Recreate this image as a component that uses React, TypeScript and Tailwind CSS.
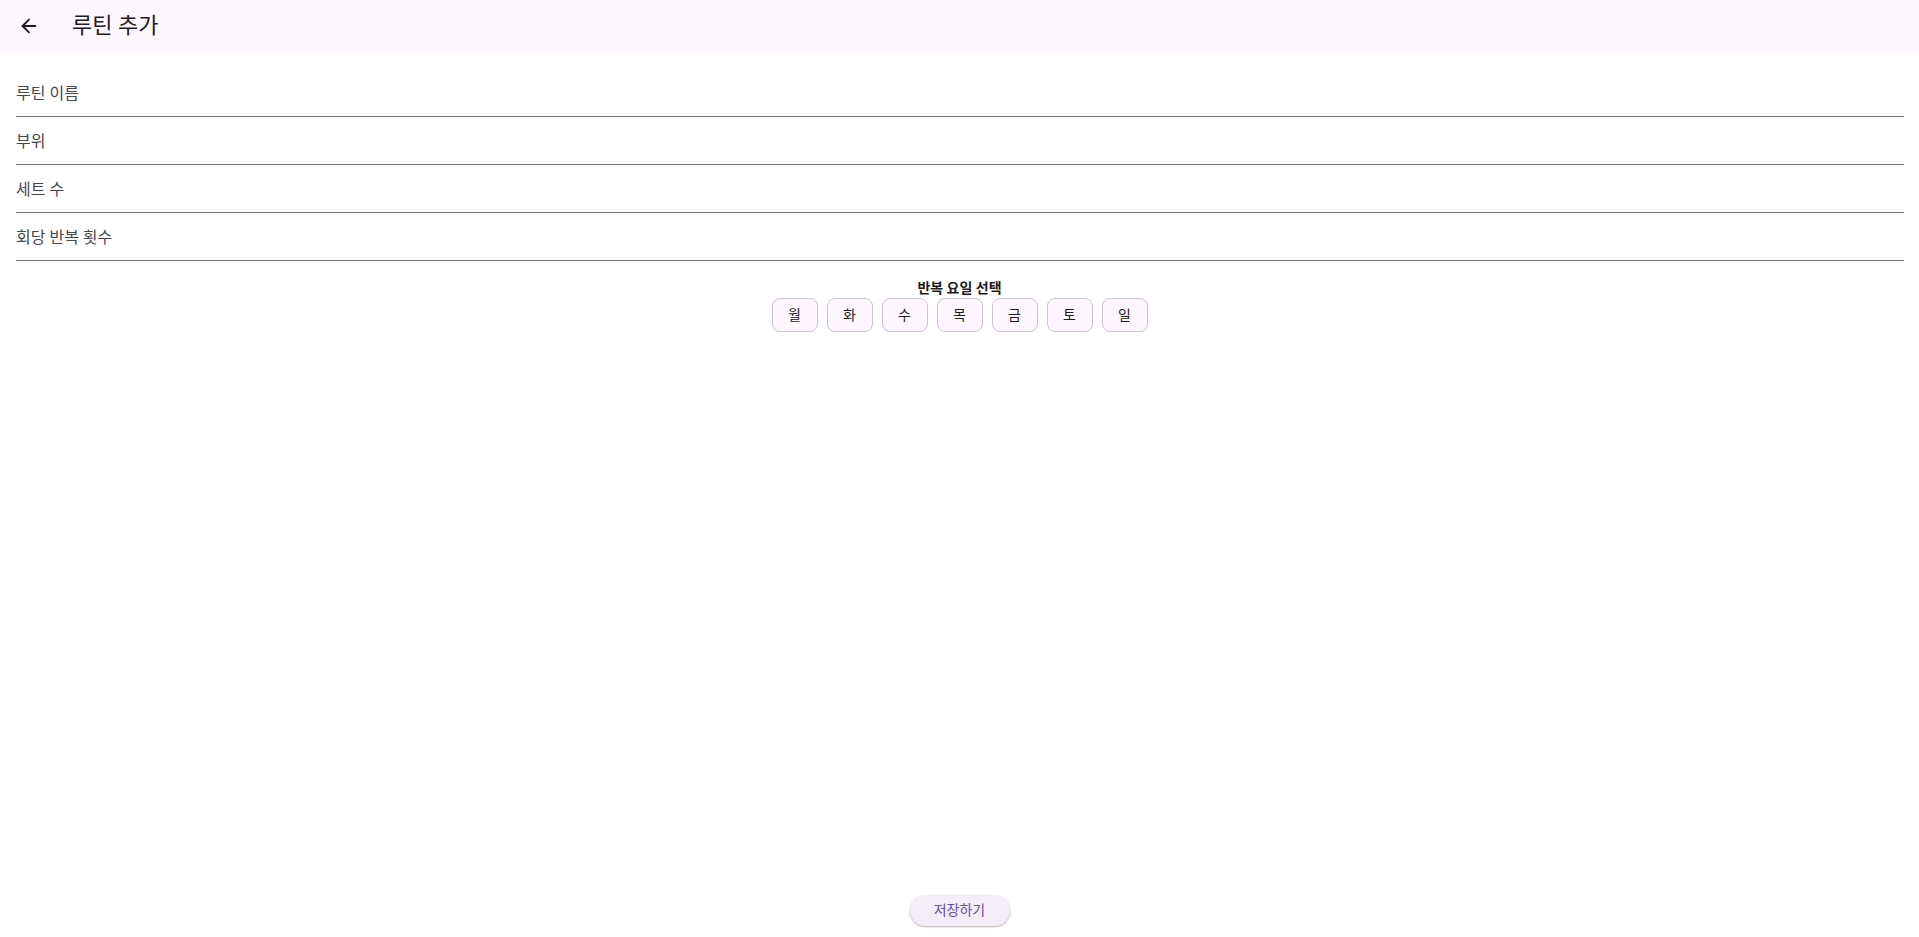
import { ArrowLeft } from 'lucide-react'

const fields = ['루틴 이름', '부위', '세트 수', '회당 반복 횟수']
const days = ['월', '화', '수', '목', '금', '토', '일']

export default function App() {
  return (
    <div
      className="min-h-screen flex flex-col bg-white text-[#1d1b20]"
      style={{ fontFamily: 'Roboto, "Noto Sans CJK KR", sans-serif' }}
    >
      {/* App bar */}
      <header className="h-[52px] bg-[#fdf7ff] flex items-center gap-[16px]">
        <div className="w-[56px] shrink-0 flex items-center justify-center pl-[1px]">
          <ArrowLeft className="w-[22px] h-[22px] text-[#1d1b20]" strokeWidth={2} />
        </div>
        <h1 className="text-[22px] leading-[28px] text-[#1d1b20]">루틴 추가</h1>
      </header>

      {/* Form */}
      <div className="pl-4 pt-[17px] pr-[15px]">
        {fields.map((label) => (
          <div
            key={label}
            className="h-[48px] border-b border-[#747079] flex items-center pt-[2px]"
          >
            <span className="text-[16px] leading-[24px] text-[#49454f]">{label}</span>
          </div>
        ))}
      </div>

      {/* Day picker */}
      <div className="flex flex-col items-center mt-[17px]">
        <p className="text-[14px] leading-[20px] font-bold text-[#1d1b20]">반복 요일 선택</p>
        <div className="flex gap-[9px]">
          {days.map((d) => (
            <button
              key={d}
              className="w-[46px] h-[34px] rounded-[8px] border border-[#cac4d0] bg-[#fef7ff] text-[14px] text-[#1d1b20] flex items-center justify-center"
            >
              {d}
            </button>
          ))}
        </div>
      </div>

      <div className="flex-1" />

      {/* Save */}
      <div className="flex justify-center pb-[11px]">
        <button className="w-[100px] h-[31px] rounded-full bg-[#f3edf7] text-[14px] text-[#6750a4] shadow-[0_1px_2px_rgba(0,0,0,0.3)]">
          저장하기
        </button>
      </div>
    </div>
  )
}
